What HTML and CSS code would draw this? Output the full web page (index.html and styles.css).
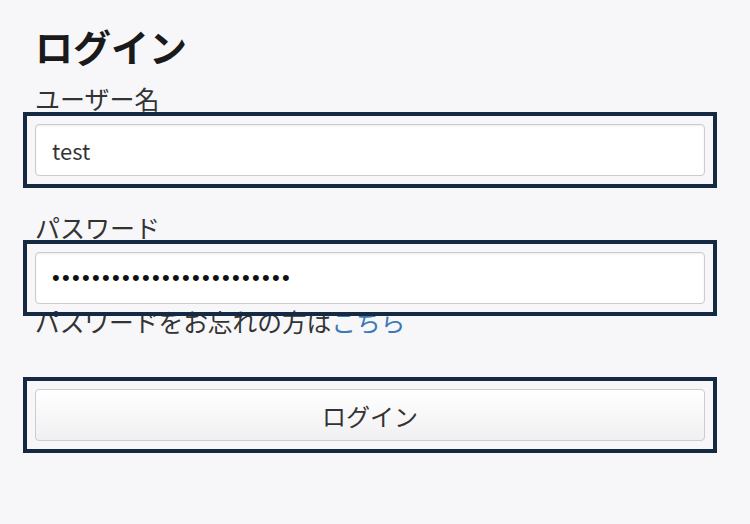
FILE: index.html
```html
<!DOCTYPE html>
<html lang="ja">
<head>
<meta charset="utf-8">
<title>ログイン</title>
<link rel="stylesheet" href="styles.css">
</head>
<body>
<main class="page">
  <h1 class="title">ログイン</h1>
  <form class="login-form">
    <label class="field-label" for="username">ユーザー名</label>
    <div class="frame">
      <input class="field-input" id="username" type="text" value="test">
    </div>
    <label class="field-label field-label--second" for="password">パスワード</label>
    <div class="frame">
      <input class="field-input field-input--password" id="password" type="password" value="abcdefghijklmnopqrstuvwx">
    </div>
    <p class="forgot">パスワードをお忘れの方は<a class="forgot-link" href="#">こちら</a></p>
    <div class="frame frame--button">
      <button class="submit" type="button">ログイン</button>
    </div>
  </form>
</main>
</body>
</html>
```

FILE: styles.css
```css
html, body {
  margin: 0;
  padding: 0;
  background: #f7f7f9;
}

body {
  font-family: "Noto Sans CJK JP", "Noto Sans", sans-serif;
  color: #333333;
  min-height: 524px;
}

.page {
  padding: 23px 46px 70px 35px;
}

.title {
  margin: 0;
  font-size: 38px;
  line-height: 46px;
  font-weight: 700;
  color: #1a1a1a;
}

.login-form {
  display: flex;
  flex-direction: column;
  margin-top: 14px;
}

.field-label {
  font-size: 25px;
  line-height: 30px;
  color: #333333;
  margin-bottom: 11px;
}

.field-label--second {
  margin-top: 36px;
  margin-bottom: 10px;
}

.frame {
  position: relative;
  display: flex;
  width: 670px;
  margin: -12px;
  padding: 8px;
  border: 4px solid #132a42;
}

.frame--button {
  margin-top: 41px;
}

.field-input {
  box-sizing: border-box;
  width: 670px;
  height: 52px;
  margin: 0;
  padding: 0 16px;
  border: 1px solid #cccccc;
  border-radius: 4px;
  background: #ffffff;
  box-shadow: inset 0 1px 2px rgba(0, 0, 0, 0.08);
  font-family: "Noto Sans CJK JP", "Noto Sans", sans-serif;
  font-size: 22px;
  color: #333333;
  outline: none;
}

.field-input--password {
  font-family: "Liberation Sans", sans-serif;
  letter-spacing: 2.3px;
  color: #111111;
}

.forgot {
  margin: 2px 0 0;
  font-size: 24.7px;
  line-height: 30px;
  color: #333333;
}

.forgot-link {
  color: #3a7ab7;
  text-decoration: none;
}

.submit {
  box-sizing: border-box;
  width: 670px;
  height: 52px;
  margin: 0;
  padding: 0;
  border: 1px solid #cccccc;
  border-radius: 4px;
  background: linear-gradient(#ffffff, #f0f0f2);
  font-family: "Noto Sans CJK JP", "Noto Sans", sans-serif;
  font-size: 24px;
  color: #333333;
  outline: none;
}
```
